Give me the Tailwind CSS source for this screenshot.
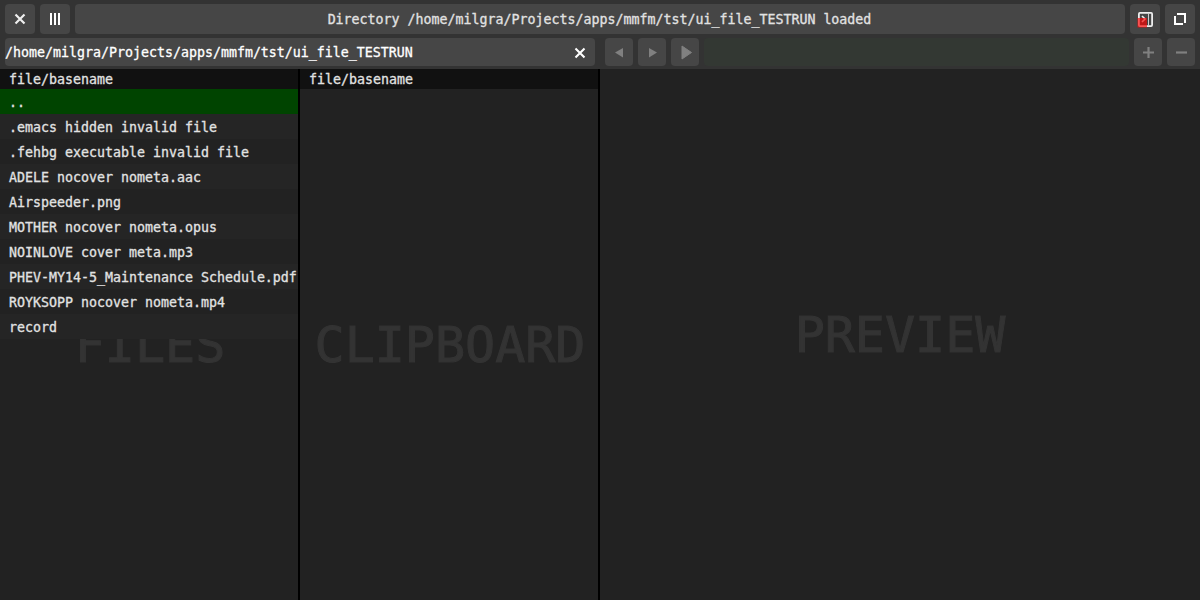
<!DOCTYPE html>
<html lang="en"><head><meta charset="utf-8"><title>mmfm</title>
<script src="https://cdn.jsdelivr.net/npm/@tailwindcss/browser@4"></script></head>
<body class="h-[600px] w-[1200px] overflow-hidden bg-[#222] font-['DejaVu_Sans_Mono',monospace] text-[13.29px] text-[#e2e2e2] [-webkit-text-stroke:0.3px]">
<div class="flex h-full flex-col">
<header class="flex h-[69px] flex-col gap-1 bg-[#333] px-[5px] pt-1">
  <div class="flex h-[30px] gap-[5px]">
    <button class="size-[30px] rounded bg-[#464646]"><svg class="size-[30px]" viewBox="0 0 30 30" fill="none" stroke="#eee" stroke-width="2.2"><path d="M10.5 10.5l9 9M19.5 10.5l-9 9"/></svg></button>
    <button class="size-[30px] rounded bg-[#464646]"><svg class="size-[30px]" viewBox="0 0 30 30" fill="#fff"><path d="M10 9h2v12h-2zM14 9h2v12h-2zM18 9h2v12h-2z"/></svg></button>
    <div class="flex-1 rounded bg-[#464646] pr-px text-center leading-[31px] whitespace-pre">Directory /home/milgra/Projects/apps/mmfm/tst/ui_file_TESTRUN loaded</div>
    <button class="size-[30px] rounded bg-[#464646]"><svg class="size-[30px]" viewBox="0 0 30 30" fill="none"><rect x="8.9" y="8.9" width="13.2" height="13.2" rx="1" stroke="#eee" stroke-width="1.8"/><path d="M18.5 9v13" stroke="#ccc"/><path d="M12 12l3 3-3 3" stroke="#eee" stroke-width="1.6"/><path d="M7.5 14h9.5v9.500h-9.500z" fill="#f00" fill-opacity=".65"/></svg></button>
    <button class="size-[30px] rounded bg-[#464646]"><svg class="size-[30px]" viewBox="0 0 30 30" fill="none" stroke="#fff" stroke-width="2"><path d="M12 10h8v9M10 12v8h8"/></svg></button>
  </div>
  <div class="flex h-7 gap-[5px]">
    <div class="mr-[5px] flex w-[590px] justify-between rounded bg-[#464646] leading-[29px] text-white"><span>/home/milgra/Projects/apps/mmfm/tst/ui_file_TESTRUN</span>
      <svg class="mr-px size-7" viewBox="0 0 28 28" fill="none" stroke="#fff" stroke-width="2.1"><path d="M9.500 10.500l9 9M18.500 10.500l-9 9"/></svg></div>
    <button class="size-7 rounded bg-[#464646]"><svg class="size-7" viewBox="0 0 28 28" fill="#808080"><path d="M10 14.500L18 10v9.500z"/></svg></button>
    <button class="size-7 rounded bg-[#464646]"><svg class="size-7" viewBox="0 0 28 28" fill="#808080"><path d="M19 14.500L11 10v9.500z"/></svg></button>
    <button class="size-7 rounded bg-[#464646]"><svg class="size-7" viewBox="0 0 28 28" fill="#808080" stroke="#808080" stroke-linejoin="round"><path d="M20.500 14.500L11 8v13z"/></svg></button>
    <div class="flex-1 rounded bg-[#333833]"></div>
    <button class="size-7 rounded bg-[#464646]"><svg class="size-7" viewBox="0 0 28 28" fill="none" stroke="#808080" stroke-width="2.2"><path d="M9 14.500h11M14.500 9v11"/></svg></button>
    <button class="size-7 rounded bg-[#464646]"><svg class="size-7" viewBox="0 0 28 28" fill="none" stroke="#808080" stroke-width="2.2"><path d="M9 14.500h11"/></svg></button>
  </div>
</header>
<main class="grid min-h-0 flex-1 grid-cols-[300px_300px_600px]">
  <section class="relative overflow-hidden border-r-2 border-black whitespace-nowrap">
    <div class="absolute inset-x-0 top-[246px] pl-0.5 text-center text-[50px] leading-[60px] text-[#333] [-webkit-text-stroke:1px]">FILES</div>
    <div class="relative">
      <div class="h-5 bg-[#111] pl-[9px] leading-[21px]">file/basename</div>
      <div class="h-[25px] bg-[#040] pl-[9px] leading-[27px]">..</div>
      <div class="h-[25px] bg-[#252525] pl-[9px] leading-[27px]">.emacs hidden invalid file</div>
      <div class="h-[25px] bg-[#222] pl-[9px] leading-[27px]">.fehbg executable invalid file</div>
      <div class="h-[25px] bg-[#252525] pl-[9px] leading-[27px]">ADELE nocover nometa.aac</div>
      <div class="h-[25px] bg-[#222] pl-[9px] leading-[27px]">Airspeeder.png</div>
      <div class="h-[25px] bg-[#252525] pl-[9px] leading-[27px]">MOTHER nocover nometa.opus</div>
      <div class="h-[25px] bg-[#222] pl-[9px] leading-[27px]">NOINLOVE cover meta.mp3</div>
      <div class="h-[25px] bg-[#252525] pl-[9px] leading-[27px]">PHEV-MY14-5_Maintenance Schedule.pdf</div>
      <div class="h-[25px] bg-[#222] pl-[9px] leading-[27px]">ROYKSOPP nocover nometa.mp4</div>
      <div class="h-[25px] bg-[#252525] pl-[9px] leading-[27px]">record</div>
    </div>
  </section>
  <section class="border-r-2 border-black">
    <div class="h-5 bg-[#111] pl-[9px] leading-[21px]">file/basename</div>
    <div class="mt-[226px] pl-0.5 text-center text-[50px] leading-[60px] text-[#333] [-webkit-text-stroke:1px]">CLIPBOARD</div>
  </section>
  <section class="pt-[236px] text-center text-[50px] leading-[60px] text-[#333] [-webkit-text-stroke:1px]">PREVIEW</section>
</main>
</div>
</body></html>
